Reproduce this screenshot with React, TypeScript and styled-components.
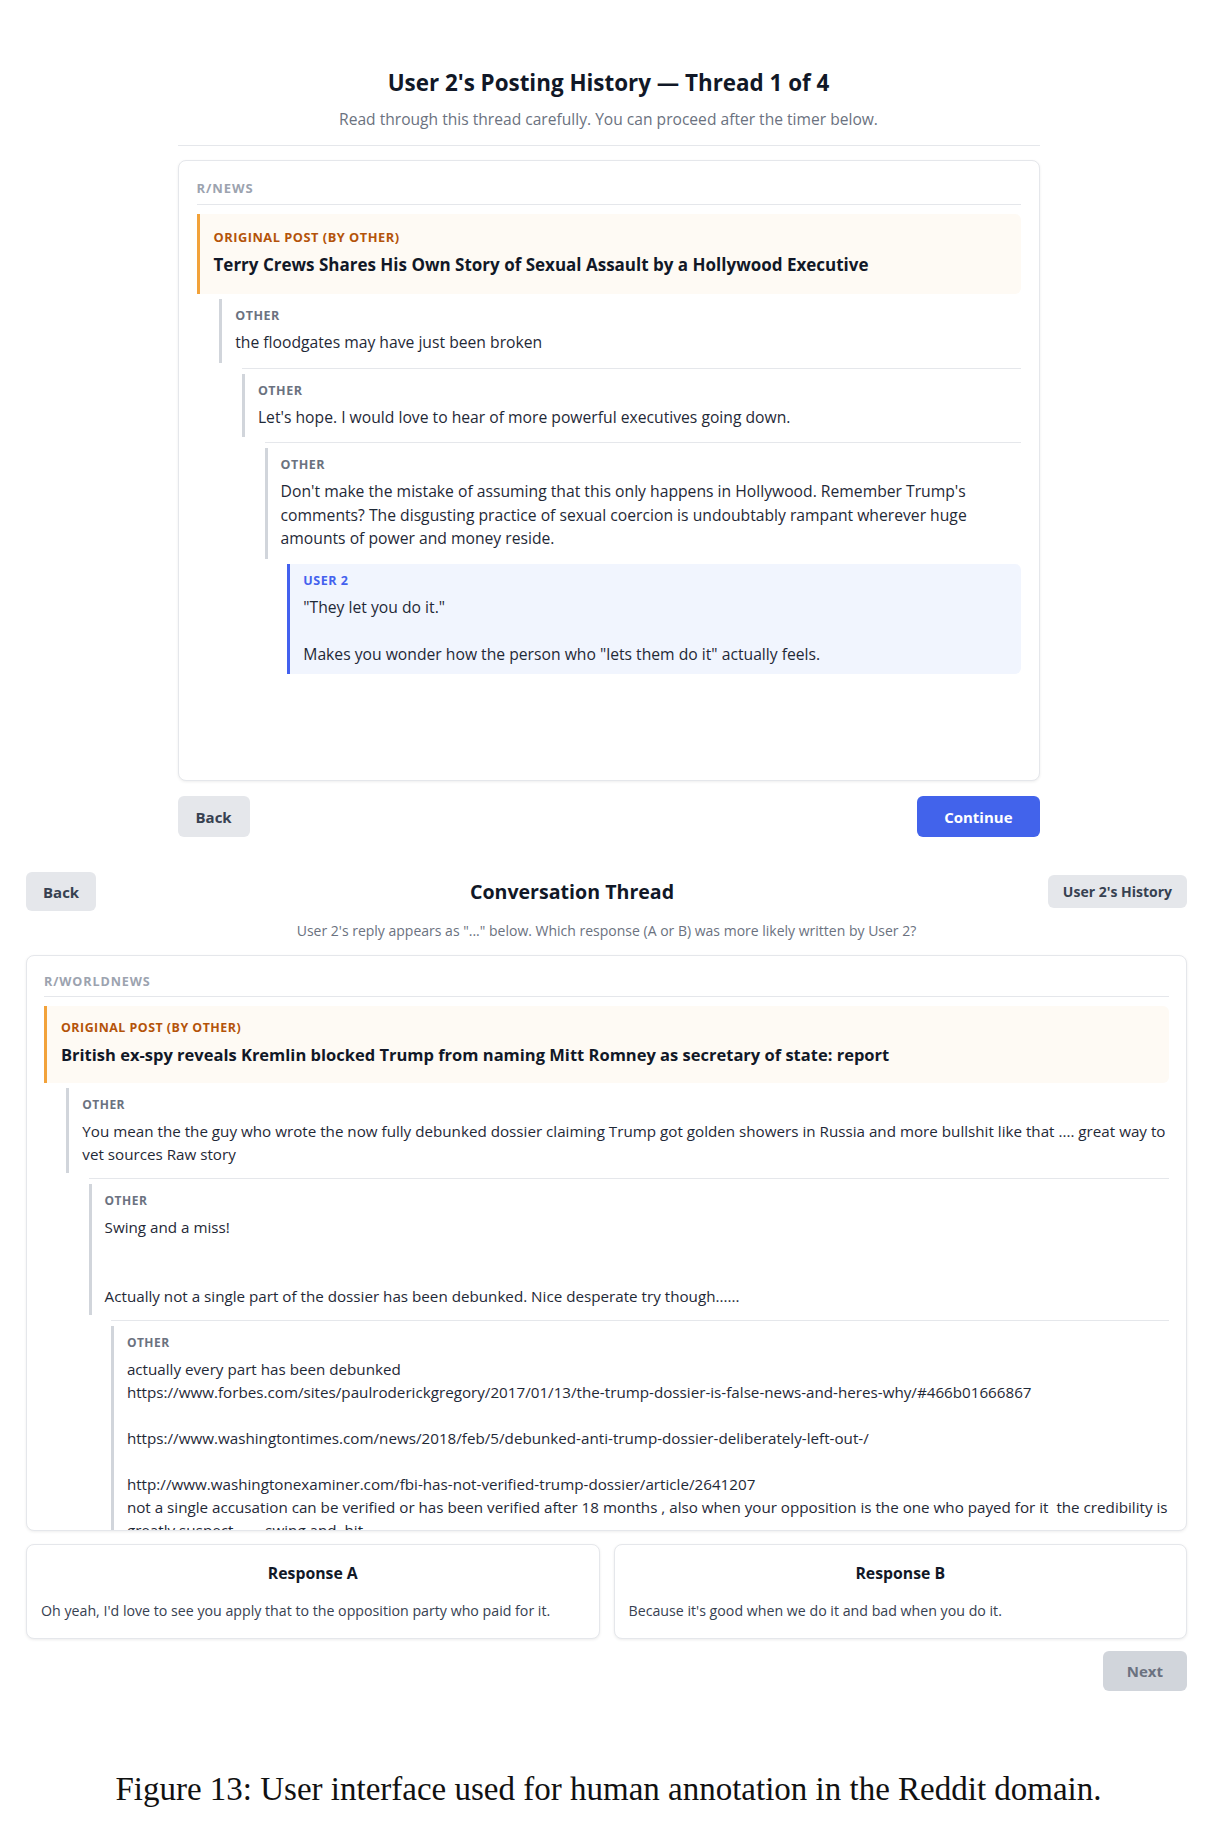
import React from "react";
import styled, { createGlobalStyle, css } from "styled-components";

const GlobalStyle = createGlobalStyle`
  html, body {
    margin: 0;
    padding: 0;
    background: #ffffff;
  }
  body {
    font-family: "Open Sans", "Noto Sans", "Liberation Sans", sans-serif;
    color: #1f2937;
    -webkit-font-smoothing: antialiased;
  }
  * { box-sizing: border-box; }
`;

const Page = styled.div`
  display: flex;
  flex-direction: column;
  width: 1217px;
`;

/* ---------- shared thread pieces ---------- */

type Size = "lg" | "sm";

const ThreadCard = styled.div<{ $height: number; $size: Size }>`
  height: ${(p) => p.$height}px;
  overflow: hidden;
  border: 1px solid #e5e7eb;
  border-radius: 8px;
  box-shadow: 0 1px 3px rgba(0, 0, 0, 0.07);
  background: #fff;
  padding: ${(p) => (p.$size === "lg" ? "18px 18px 0" : "17px 17px 0")};
`;

const Subreddit = styled.div<{ $size: Size }>`
  font-size: ${(p) => (p.$size === "lg" ? "13px" : "12.6px")};
  line-height: 18px;
  font-weight: 700;
  letter-spacing: 0.07em;
  text-transform: uppercase;
  color: #9ca3af;
  padding-bottom: ${(p) => (p.$size === "lg" ? "7px" : "5px")};
  border-bottom: 1px solid #e5e7eb;
  margin-bottom: 9px;
`;

const OriginalPost = styled.div<{ $size: Size }>`
  border-left: 3px solid #f2a23a;
  background: #fefaf4;
  border-radius: 0 6px 6px 0;
  padding: ${(p) => (p.$size === "lg" ? "14px 16px 17px 14px" : "13px 16px 16px 14px")};
`;

const OPLabel = styled.div<{ $size: Size }>`
  font-size: ${(p) => (p.$size === "lg" ? "12.8px" : "12.4px")};
  line-height: 18px;
  font-weight: 700;
  letter-spacing: 0.04em;
  text-transform: uppercase;
  color: #b45309;
  margin-bottom: 6px;
`;

const OPTitle = styled.div<{ $size: Size }>`
  font-size: ${(p) => (p.$size === "lg" ? "17px" : "16.5px")};
  line-height: ${(p) => (p.$size === "lg" ? "25px" : "24px")};
  font-weight: 700;
  color: #111827;
`;

const CommentWrap = styled.div<{ $divided: boolean }>`
  margin-top: 5px;
  ${(p) =>
    p.$divided &&
    css`
      border-top: 1px solid #e5e7eb;
      padding-top: 5px;
    `}
`;

const CommentBody = styled.div<{ $mine: boolean; $size: Size }>`
  border-left: 3px solid ${(p) => (p.$mine ? "#4361ee" : "#d1d5db")};
  padding: 8px ${(p) => (p.$mine ? "14px" : "0")} ${(p) => (p.$size === "lg" ? "8px" : "7px")} 13px;
  ${(p) =>
    p.$mine &&
    css`
      background: #f1f5fe;
      border-radius: 0 6px 6px 0;
    `}
`;

const Author = styled.div<{ $mine: boolean; $size: Size }>`
  font-size: ${(p) => (p.$size === "lg" ? "12.5px" : "12px")};
  line-height: 18px;
  font-weight: 700;
  letter-spacing: 0.04em;
  text-transform: uppercase;
  color: ${(p) => (p.$mine ? "#4361ee" : "#6b7280")};
  margin-bottom: 6px;
`;

const CommentText = styled.div<{ $size: Size }>`
  font-size: ${(p) => (p.$size === "lg" ? "15.7px" : "15.2px")};
  line-height: ${(p) => (p.$size === "lg" ? "23.5px" : "23px")};
  color: #1f2937;
  white-space: pre-wrap;
  word-break: break-word;
`;

type Comment = { author: string; text: string; mine?: boolean; divided?: boolean };

function Thread({
  subreddit,
  title,
  comments,
  height,
  size,
  indent,
}: {
  subreddit: string;
  title: string;
  comments: Comment[];
  height: number;
  size: Size;
  indent: number;
}) {
  return (
    <ThreadCard $height={height} $size={size}>
      <Subreddit $size={size}>{subreddit}</Subreddit>
      <OriginalPost $size={size}>
        <OPLabel $size={size}>Original Post (by Other)</OPLabel>
        <OPTitle $size={size}>{title}</OPTitle>
      </OriginalPost>
      {comments.map((c, i) => (
        <CommentWrap
          key={i}
          $divided={!!c.divided}
          style={{ marginLeft: (i + 1) * indent }}
        >
          <CommentBody $mine={!!c.mine} $size={size}>
            <Author $mine={!!c.mine} $size={size}>
              {c.author}
            </Author>
            <CommentText $size={size}>{c.text}</CommentText>
          </CommentBody>
        </CommentWrap>
      ))}
    </ThreadCard>
  );
}

/* ---------- buttons ---------- */

type Tone = "neutral" | "primary" | "disabled";

const Button = styled.button<{ $tone: Tone; $h: number; $px: number; $fs: number }>`
  height: ${(p) => p.$h}px;
  padding: 0 ${(p) => p.$px}px;
  border: none;
  border-radius: 6px;
  font-family: inherit;
  font-size: ${(p) => p.$fs}px;
  font-weight: 700;
  cursor: pointer;
  flex-shrink: 0;
  ${(p) =>
    p.$tone === "primary"
      ? css`
          background: #4263eb;
          color: #ffffff;
        `
      : p.$tone === "disabled"
      ? css`
          background: #d1d5db;
          color: #6b7280;
          cursor: default;
        `
      : css`
          background: #e5e7eb;
          color: #374151;
        `}
`;

/* ---------- history view ---------- */

const HistorySection = styled.section`
  width: 862px;
  margin: 0 auto;
  padding-top: 68px;
`;

const HistoryHeader = styled.header`
  text-align: center;
  padding-bottom: 16px;
  border-bottom: 1px solid #e5e7eb;
  margin-bottom: 14px;
`;

const HistoryTitle = styled.h1`
  margin: 0 0 11px;
  font-size: 22.4px;
  line-height: 30px;
  font-weight: 700;
  color: #111827;
`;

const Lead = styled.p<{ $fs: number }>`
  margin: 0;
  font-size: ${(p) => p.$fs}px;
  line-height: 20px;
  color: #6b7280;
  text-align: center;
`;

const NavRow = styled.div`
  display: flex;
  justify-content: space-between;
  align-items: center;
  margin-top: 15px;
`;

/* ---------- conversation view ---------- */

const ConversationSection = styled.section`
  padding: 35px 30px 0 26px;
  display: flex;
  flex-direction: column;
`;

const TopBar = styled.div`
  display: flex;
  align-items: center;
  justify-content: space-between;
`;

const ConversationTitle = styled.h2`
  margin: 0;
  font-size: 19.6px;
  line-height: 26px;
  font-weight: 700;
  color: #111827;
`;

const Instruction = styled(Lead)`
  margin: 11px 0 15px;
  line-height: 18px;
`;

const ResponseGrid = styled.div`
  display: grid;
  grid-template-columns: 1fr 1fr;
  gap: 14px;
  margin-top: 13px;
`;

const ResponseCard = styled.div`
  border: 1px solid #e5e7eb;
  border-radius: 8px;
  box-shadow: 0 1px 3px rgba(0, 0, 0, 0.08);
  background: #fff;
  padding: 16px 14px 17px;
  cursor: pointer;
`;

const ResponseTitle = styled.div`
  text-align: center;
  font-size: 15.8px;
  line-height: 24px;
  font-weight: 700;
  color: #111827;
  margin-bottom: 16px;
`;

const ResponseText = styled.div`
  font-size: 14.2px;
  line-height: 20px;
  color: #374151;
`;

const Footer = styled.div`
  display: flex;
  justify-content: flex-end;
  margin-top: 12px;
`;

const Caption = styled.p`
  margin: 80px 0 0;
  text-align: center;
  font-family: "Liberation Serif", "DejaVu Serif", serif;
  font-size: 33px;
  line-height: 36px;
  color: #111;
`;

const historyComments: Comment[] = [
  { author: "Other", text: "the floodgates may have just been broken" },
  {
    author: "Other",
    divided: true,
    text: "Let's hope. I would love to hear of more powerful executives going down.",
  },
  {
    author: "Other",
    divided: true,
    text:
      "Don't make the mistake of assuming that this only happens in Hollywood. Remember Trump's comments? The disgusting practice of sexual coercion is undoubtably rampant wherever huge amounts of power and money reside.",
  },
  {
    author: "User 2",
    mine: true,
    text: "\"They let you do it.\"\n\nMakes you wonder how the person who \"lets them do it\" actually feels.",
  },
];

const conversationComments: Comment[] = [
  {
    author: "Other",
    text:
      "You mean the the guy who wrote the now fully debunked dossier claiming Trump got golden showers in Russia and more bullshit like that .... great way to vet sources Raw story",
  },
  {
    author: "Other",
    divided: true,
    text:
      "Swing and a miss!\n\n\nActually not a single part of the dossier has been debunked. Nice desperate try though......",
  },
  {
    author: "Other",
    divided: true,
    text:
      "actually every part has been debunked\nhttps://www.forbes.com/sites/paulroderickgregory/2017/01/13/the-trump-dossier-is-false-news-and-heres-why/#466b01666867\n\nhttps://www.washingtontimes.com/news/2018/feb/5/debunked-anti-trump-dossier-deliberately-left-out-/\n\nhttp://www.washingtonexaminer.com/fbi-has-not-verified-trump-dossier/article/2641207\nnot a single accusation can be verified or has been verified after 18 months , also when your opposition is the one who payed for it  the credibility is greatly suspect ...... swing and  hit",
  },
];

export default function App() {
  return (
    <>
      <GlobalStyle />
      <Page>
        <HistorySection>
          <HistoryHeader>
            <HistoryTitle>User 2's Posting History — Thread 1 of 4</HistoryTitle>
            <Lead $fs={15.6}>
              Read through this thread carefully. You can proceed after the timer below.
            </Lead>
          </HistoryHeader>
          <Thread
            subreddit="r/news"
            title="Terry Crews Shares His Own Story of Sexual Assault by a Hollywood Executive"
            comments={historyComments}
            height={621}
            size="lg"
            indent={22.7}
          />
          <NavRow>
            <Button $tone="neutral" $h={41} $px={18} $fs={15}>
              Back
            </Button>
            <Button $tone="primary" $h={41} $px={27} $fs={15}>
              Continue
            </Button>
          </NavRow>
        </HistorySection>

        <ConversationSection>
          <TopBar>
            <Button $tone="neutral" $h={39} $px={17} $fs={15}>
              Back
            </Button>
            <ConversationTitle>Conversation Thread</ConversationTitle>
            <Button $tone="neutral" $h={33} $px={15} $fs={14}>
              User 2's History
            </Button>
          </TopBar>
          <Instruction $fs={14}>
            User 2's reply appears as "..." below. Which response (A or B) was more likely written by User 2?
          </Instruction>
          <Thread
            subreddit="r/worldnews"
            title="British ex-spy reveals Kremlin blocked Trump from naming Mitt Romney as secretary of state: report"
            comments={conversationComments}
            height={576}
            size="sm"
            indent={22.3}
          />
          <ResponseGrid>
            <ResponseCard>
              <ResponseTitle>Response A</ResponseTitle>
              <ResponseText>
                Oh yeah, I'd love to see you apply that to the opposition party who paid for it.
              </ResponseText>
            </ResponseCard>
            <ResponseCard>
              <ResponseTitle>Response B</ResponseTitle>
              <ResponseText>Because it's good when we do it and bad when you do it.</ResponseText>
            </ResponseCard>
          </ResponseGrid>
          <Footer>
            <Button $tone="disabled" $h={40} $px={24} $fs={15}>
              Next
            </Button>
          </Footer>
        </ConversationSection>

        <Caption>Figure 13: User interface used for human annotation in the Reddit domain.</Caption>
      </Page>
    </>
  );
}
